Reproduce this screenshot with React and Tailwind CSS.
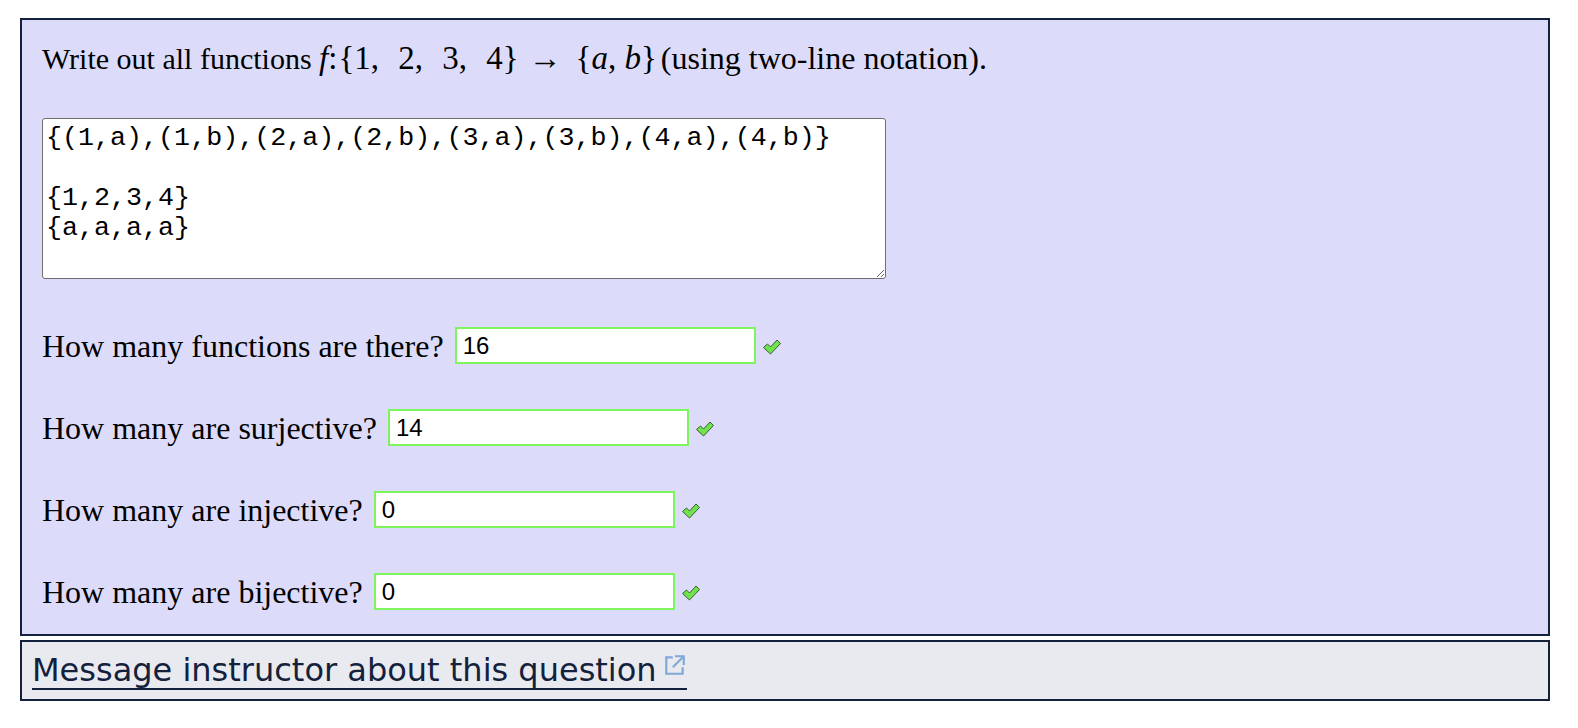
const CheckMark = () => (
    <svg width="20" height="18" viewBox="0 0 20 18" className="shrink-0">
        <path
            d="M1.5 9.5 L5.5 6 L8.5 9 L15 2 L18.5 5.5 L8.5 16 Z"
            fill="#6fe34c"
            stroke="#3d5a38"
            strokeWidth="1"
            strokeLinejoin="round"
        />
    </svg>
);

const ExternalIcon = () => (
    <svg width="24" height="24" viewBox="0 0 22 22" className="inline-block ml-[6px] -mt-[14px] align-middle">
        <path d="M9 4 H3 V19 H18 V13" fill="none" stroke="#80a8d8" strokeWidth="2" />
        <path d="M11 3 H19 V11" fill="none" stroke="#80a8d8" strokeWidth="2" />
        <path d="M19 3 L9 13" fill="none" stroke="#80a8d8" strokeWidth="2" />
    </svg>
);

const Question = ({ label, value }) => (
    <div className="flex items-center h-[37px]">
        <span className="text-[32px] text-black">{label}</span>
        <input
            readOnly
            value={value}
            className="ml-[11px] w-[301px] h-[37px] border-2 border-[#7ef55c] bg-white px-[6px] text-[24px] text-black outline-none"
            style={{ fontFamily: '"Liberation Sans", Arial, sans-serif' }}
        />
        <span className="ml-[6px] mt-[2px]">
            <CheckMark />
        </span>
    </div>
);

const App = () => {
    const answer = '{(1,a),(1,b),(2,a),(2,b),(3,a),(3,b),(4,a),(4,b)}\n\n{1,2,3,4}\n{a,a,a,a}';

    return (
        <div className="min-h-screen bg-white pl-[20px] pt-[18px]" style={{ fontFamily: '"Liberation Serif", "Times New Roman", serif' }}>
            {/* Problem body */}
            <div className="w-[1530px] border-2 border-[#14213d] bg-[#dcdcfa] px-[20px] pt-[20px] pb-[24px]">
                <p className="text-[30px] leading-[36px] text-black whitespace-nowrap">
                    Write out all functions{' '}
                    <span className="text-[33px]">
                        <i>f</i>:<span className="ml-[1px]">{'{'}1,<span className="mr-[11px]" /> 2,<span className="mr-[11px]" /> 3,<span className="mr-[11px]" /> 4{'}'}</span>
                        <span className="ml-[10px] mr-[14px]">→</span>
                        {'{'}<i>a</i>, <i>b</i>{'}'}
                    </span>
                    <span className="ml-[4px] text-[32px]">(using two-line notation).</span>
                </p>

                <textarea
                    readOnly
                    value={answer}
                    className="mt-[41px] block w-[844px] h-[161px] border border-[#6e6e6e] rounded-[3px] bg-white px-[3px] pt-[4px] text-[26.7px] leading-[30px] text-black outline-none"
                    style={{ fontFamily: '"Liberation Mono", "Courier New", monospace' }}
                />

                <div className="mt-[48px] flex flex-col gap-[45px]">
                    <Question label="How many functions are there?" value="16" />
                    <Question label="How many are surjective?" value="14" />
                    <Question label="How many are injective?" value="0" />
                    <Question label="How many are bijective?" value="0" />
                </div>
            </div>

            {/* Footer */}
            <div className="mt-[4px] w-[1530px] h-[61px] border-2 border-[#14213d] bg-[#e9eaef] px-[10px] flex items-center">
                <a
                    href="#"
                    className="inline-block text-[32px] leading-[36px] text-[#14213d] no-underline border-b-2 border-[#14213d]"
                    style={{ fontFamily: '"DejaVu Sans", Verdana, sans-serif' }}
                >
                    Message instructor about this question
                    <ExternalIcon />
                </a>
            </div>
        </div>
    );
};

export default App;
